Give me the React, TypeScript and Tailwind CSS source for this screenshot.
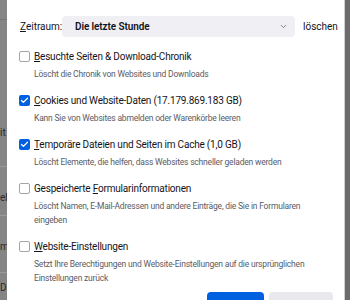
import { ChevronDown, Check } from 'lucide-react';

type Option = {
  prefix?: string;
  accessKey: string;
  rest: string;
  desc: string;
  checked: boolean;
};

const options: Option[] = [
  {
    accessKey: 'B',
    rest: 'esuchte Seiten & Download-Chronik',
    desc: 'Löscht die Chronik von Websites und Downloads',
    checked: false,
  },
  {
    accessKey: 'C',
    rest: 'ookies und Website-Daten (17.179.869.183 GB)',
    desc: 'Kann Sie von Websites abmelden oder Warenkörbe leeren',
    checked: true,
  },
  {
    accessKey: 'T',
    rest: 'emporäre Dateien und Seiten im Cache (1,0 GB)',
    desc: 'Löscht Elemente, die helfen, dass Websites schneller geladen werden',
    checked: true,
  },
  {
    prefix: 'Gespeicherte ',
    accessKey: 'F',
    rest: 'ormularinformationen',
    desc: 'Löscht Namen, E-Mail-Adressen und andere Einträge, die Sie in Formularen eingeben',
    checked: false,
  },
  {
    accessKey: 'W',
    rest: 'ebsite-Einstellungen',
    desc: 'Setzt Ihre Berechtigungen und Website-Einstellungen auf die ursprünglichen Einstellungen zurück',
    checked: false,
  },
];

function Box({ checked }: { checked: boolean }) {
  if (checked) {
    return (
      <span className="flex h-[11px] w-[11px] shrink-0 items-center justify-center rounded-[2px] bg-[#0061e0]">
        <Check className="h-[9px] w-[9px] text-white" strokeWidth={3.5} />
      </span>
    );
  }
  return <span className="h-[11px] w-[11px] shrink-0 rounded-[2px] border border-[#a4a4ac] bg-white" />;
}

export default function App() {
  return (
    <div className="flex h-[300px] w-[350px] overflow-hidden font-['Roboto',sans-serif] text-[#15141a]">
      {/* dimmed page behind the dialog */}
      <div className="flex w-[7px] shrink-0 flex-col overflow-hidden bg-[#858585] text-[10px] leading-none text-[#2a2a2a]">
        <div className="h-[20px] border-b border-[#777]" />
        <div className="mt-[108px]">it</div>
        <div className="mt-[28px] h-px bg-[#9a9a9a]" />
        <div className="mt-[26px]">eb</div>
        <div className="mt-[12px] h-px bg-[#9a9a9a]" />
        <div className="mt-[26px]">m</div>
        <div className="mt-[20px] h-px bg-[#9a9a9a]" />
        <div className="mt-[10px]">Da</div>
      </div>

      <div className="flex min-w-0 flex-1 flex-col bg-white">
        <div className="mt-[3px] h-px bg-[#e4e4e8]" />

        <div className="mt-[13px] flex h-[21px] items-center pl-[13px] text-[10px]">
          <span className="w-[42px]">
            <span className="underline">Z</span>eitraum:
          </span>
          <div className="flex h-[21px] w-[233px] items-center justify-between rounded-[4px] bg-[#f0f0f4] pl-[13px] pr-[7px]">
            <span className="font-semibold tracking-[-0.1px]">Die letzte Stunde</span>
            <ChevronDown className="h-[9px] w-[9px] text-[#5b5b66]" strokeWidth={2} />
          </div>
          <span className="ml-[8px]">löschen</span>
        </div>

        <div className="mt-[12px] flex flex-col gap-[12px] pl-[12px] pr-[28px]">
          {options.map((o) => (
            <div key={o.rest} className="flex flex-col">
              <div className="flex h-[14px] items-center gap-[4px] text-[10px] tracking-[-0.2px]">
                <Box checked={o.checked} />
                <span className="whitespace-nowrap">
                  {o.prefix}
                  <span className="underline">{o.accessKey}</span>
                  {o.rest}
                </span>
              </div>
              <p className="mt-[4px] pl-[15px] text-[8.5px] leading-[14px] tracking-[-0.2px] text-[#5b5b66]">
                {o.desc}
              </p>
            </div>
          ))}
        </div>

        <div className="mt-[7px] flex justify-end gap-[5px] pr-[11px]">
          <button className="h-[22px] w-[57px] rounded-[4px] bg-[#0061e0] pt-[4px] text-[10px] font-medium text-white">
            Löschen
          </button>
          <button className="h-[22px] w-[64px] rounded-[4px] bg-[#e9e9ed] pt-[4px] text-[10px] font-medium">
            Abbrechen
          </button>
        </div>
      </div>

      <div className="w-px shrink-0 bg-[#cfcfd4]" />
      <div className="w-[5px] shrink-0 bg-[#6b6b6b]" />
    </div>
  );
}
